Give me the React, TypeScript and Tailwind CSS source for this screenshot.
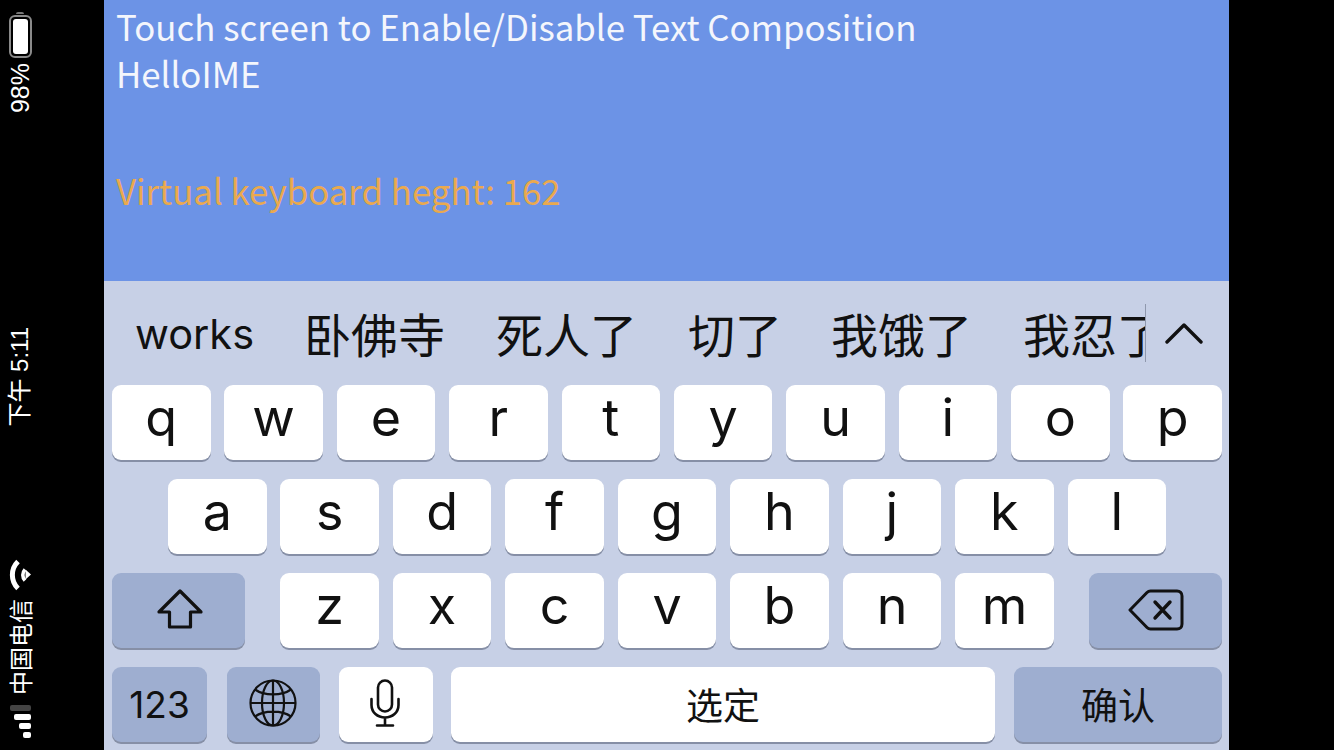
import type { ReactNode } from "react";

const cjk = "font-['Noto_Sans_CJK_SC',sans-serif]";

function Key({ children, dark, className = "" }: { children: ReactNode; dark?: boolean; className?: string }) {
  return (
    <div
      className={`flex h-[75px] shrink-0 items-center justify-center rounded-[9px] text-[#111] shadow-[0_2px_0_#868fa6] ${
        dark ? "bg-[#9eaed0]" : "bg-white"
      } ${className}`}
    >
      {children}
    </div>
  );
}

function Letter({ c }: { c: string }) {
  return (
    <Key className="w-[98.5px]">
      <span className="pb-[9px] text-[52px] leading-none">{c}</span>
    </Key>
  );
}

function ShiftIcon() {
  return (
    <svg className="mb-[3px] ml-[2px]" width="48" height="42" viewBox="0 0 48 42" fill="none" stroke="#111" strokeWidth="3.2" strokeLinejoin="round">
      <path d="M24 3 L45 24 H34.5 V39 H13.5 V24 H3 Z" />
    </svg>
  );
}

function DeleteIcon() {
  return (
    <svg className="mb-[2px]" width="56" height="42" viewBox="0 0 56 42" fill="none" stroke="#111" strokeWidth="3" strokeLinecap="round" strokeLinejoin="round">
      <path d="M2 21 19 3.5C20 2.5 21 2 22.5 2H49c3 0 5 2 5 5v28c0 3-2 5-5 5H22.5c-1.500 0-2.500-.5-3.500-1.500Z" />
      <path d="M27 13 42 29M42 13 27 29" strokeWidth="3.4" />
    </svg>
  );
}

function GlobeIcon() {
  return (
    <svg className="mb-[3px] mr-[2px]" width="48" height="48" viewBox="0 0 48 48" fill="none" stroke="#111" strokeWidth="2.2">
      <circle cx="24" cy="24" r="22.5" />
      <ellipse cx="24" cy="24" rx="11" ry="22.5" />
      <path d="M24 1.500V46.500M1.500 24H46.500M6 10.500C15 17 33 17 42 10.500M6 37.500C15 31 33 31 42 37.500" />
    </svg>
  );
}

function MicIcon() {
  return (
    <svg className="mb-[3px] mr-[2px]" width="30" height="48" viewBox="0 0 30 48" fill="none" stroke="#111" strokeWidth="2.6" strokeLinecap="round">
      <rect x="8" y="1.500" width="14" height="31" rx="7" />
      <path d="M1.500 20v6c0 7.500 6 12.500 13.500 12.500S28.500 33.500 28.500 26v-6M15 38.500V46M7 46.500H23" />
    </svg>
  );
}

function WifiIcon() {
  return (
    <svg className="shrink-0" width="24" height="32" viewBox="0 0 24 32" fill="none" stroke="#fff" strokeLinecap="butt">
      <path d="M10 2.500A19 19 0 0 0 10 29.500" strokeWidth="5" />
      <path d="M17 10.500A8 8 0 0 0 17 21.500" strokeWidth="3.600" />
      <path d="M23 15.500 17.500 10.500 17.500 20.500Z" fill="#fff" stroke="none" />
    </svg>
  );
}

function StatusBar() {
  return (
    <div className="flex h-full w-[104px] shrink-0 flex-col items-center bg-black pr-[64px] text-white">
      {/* everything here is turned with the phone */}
      <div className="relative mt-[15px] h-[43px] w-[23px] shrink-0 rounded-[6px] border-2 border-[#8a8a8a] p-[2px]">
        <div className="absolute -top-[5px] left-[5px] h-[2px] w-2 rounded-t bg-[#777]" />
        <div className="h-full w-full rounded-[3px] bg-white" />
      </div>
      <span className="mt-[5px] rotate-180 text-[25px] leading-none [writing-mode:vertical-rl] font-['Liberation_Sans',sans-serif]">
        98%
      </span>
      <span className="mt-[214px] rotate-180 whitespace-nowrap text-[24px] leading-none [text-orientation:sideways] [writing-mode:vertical-rl] font-['Liberation_Sans','Noto_Sans_CJK_SC',sans-serif]">
        下午 5:11
      </span>
      <div className="mt-[132px]">
        <WifiIcon />
      </div>
      <span className={`mt-[8px] rotate-180 whitespace-nowrap text-[24px] leading-none [text-orientation:sideways] [writing-mode:vertical-rl] ${cjk}`}>
        中国电信
      </span>
      <div className="mt-[10px] flex flex-col items-end gap-[3px] self-center">
        <div className="h-[6px] w-[21px] rounded-[2px] bg-[#444]" />
        <div className="h-[6px] w-[17px] rounded-[2px] bg-white" />
        <div className="h-[6px] w-[12px] rounded-[2px] bg-white" />
        <div className="h-[6px] w-[8px] rounded-[2px] bg-white" />
      </div>
    </div>
  );
}

export default function App() {
  const candidates = ["卧佛寺", "死人了", "切了", "我饿了", "我忍了"];
  return (
    <div className="flex h-[750px] w-[1334px] overflow-hidden bg-black font-['Inter','Noto_Sans_CJK_SC',sans-serif]">
      <StatusBar />
      <main className="flex h-full w-[1125px] shrink-0 flex-col">
        <section className={`flex h-[281px] shrink-0 flex-col bg-[#6c93e6] pl-[12px] pt-[3px] text-[34.8px] leading-[47px] text-[#f4f6fc] ${cjk}`}>
          <p>Touch screen to Enable/Disable Text Composition</p>
          <p>HelloIME</p>
          <p className="mt-[70px] text-[#eaa94e]">Virtual keyboard heght: 162</p>
        </section>
        <section className="flex flex-1 flex-col bg-[#c7d0e6] pl-2 pr-[7px]">
          <div className="flex h-[104px] shrink-0 items-center pb-px text-[#111]">
            <span className="ml-[23px] w-[169px] shrink-0 pt-[5px] text-[41.500px] leading-none">works</span>
            <div className="relative w-[842px] shrink-0">
              <div className={`flex h-[68px] gap-[51px] overflow-hidden whitespace-nowrap text-[47px] leading-[68px] ${cjk}`}>
                {candidates.map((c, i) => (
                  <span key={c} className={i === 3 ? "-ml-[2px]" : ""}>
                    {c}
                  </span>
                ))}
              </div>
              <div className="absolute right-0 top-[5px] h-[58px] w-px bg-[#8f98ad]" />
            </div>
            <svg className="ml-[19px] shrink-0" width="38" height="26" viewBox="0 0 38 26" fill="none" stroke="#111" strokeWidth="3.4" strokeLinecap="round" strokeLinejoin="round">
              <path d="M2 22 19 5l17 17" />
            </svg>
          </div>
          <div className="flex flex-col gap-[19px]">
            <div className="flex justify-between">
              {"qwertyuiop".split("").map((c) => (
                <Letter key={c} c={c} />
              ))}
            </div>
            <div className="flex justify-between px-[56px]">
              {"asdfghjkl".split("").map((c) => (
                <Letter key={c} c={c} />
              ))}
            </div>
            <div className="flex justify-between">
              <Key dark className="w-[133px]">
                <ShiftIcon />
              </Key>
              <div className="flex gap-[14px]">
                {"zxcvbnm".split("").map((c) => (
                  <Letter key={c} c={c} />
                ))}
              </div>
              <Key dark className="w-[133px]">
                <DeleteIcon />
              </Key>
            </div>
            <div className="flex">
              <Key dark className="w-[95px] text-[37px]">123</Key>
              <Key dark className="ml-[20px] w-[93px]">
                <GlobeIcon />
              </Key>
              <Key className="ml-[19px] w-[94px]">
                <MicIcon />
              </Key>
              <Key className={`ml-[18px] w-[544px] text-[37px] ${cjk}`}>选定</Key>
              <Key dark className={`ml-[19px] w-[208px] text-[37px] ${cjk}`}>确认</Key>
            </div>
          </div>
        </section>
      </main>
      <div className="flex-1 bg-black" />
    </div>
  );
}
